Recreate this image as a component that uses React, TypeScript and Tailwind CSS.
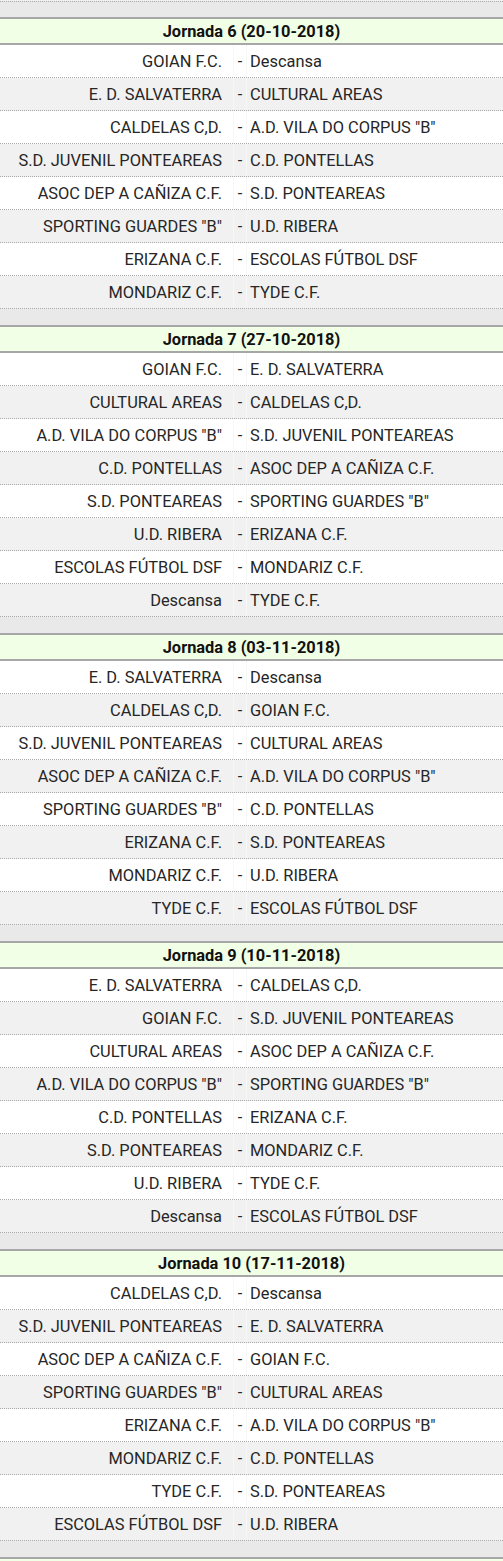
import React from "react";

type Section = { title: string; rows: [string, string][] };

const sections: Section[] = [
  {
    title: "Jornada 6 (20-10-2018)",
    rows: [
      ["GOIAN F.C.", "Descansa"],
      ["E. D. SALVATERRA", "CULTURAL AREAS"],
      ["CALDELAS C,D.", 'A.D. VILA DO CORPUS "B"'],
      ["S.D. JUVENIL PONTEAREAS", "C.D. PONTELLAS"],
      ["ASOC DEP A CAÑIZA C.F.", "S.D. PONTEAREAS"],
      ['SPORTING GUARDES "B"', "U.D. RIBERA"],
      ["ERIZANA C.F.", "ESCOLAS FÚTBOL DSF"],
      ["MONDARIZ C.F.", "TYDE C.F."],
    ],
  },
  {
    title: "Jornada 7 (27-10-2018)",
    rows: [
      ["GOIAN F.C.", "E. D. SALVATERRA"],
      ["CULTURAL AREAS", "CALDELAS C,D."],
      ['A.D. VILA DO CORPUS "B"', "S.D. JUVENIL PONTEAREAS"],
      ["C.D. PONTELLAS", "ASOC DEP A CAÑIZA C.F."],
      ["S.D. PONTEAREAS", 'SPORTING GUARDES "B"'],
      ["U.D. RIBERA", "ERIZANA C.F."],
      ["ESCOLAS FÚTBOL DSF", "MONDARIZ C.F."],
      ["Descansa", "TYDE C.F."],
    ],
  },
  {
    title: "Jornada 8 (03-11-2018)",
    rows: [
      ["E. D. SALVATERRA", "Descansa"],
      ["CALDELAS C,D.", "GOIAN F.C."],
      ["S.D. JUVENIL PONTEAREAS", "CULTURAL AREAS"],
      ["ASOC DEP A CAÑIZA C.F.", 'A.D. VILA DO CORPUS "B"'],
      ['SPORTING GUARDES "B"', "C.D. PONTELLAS"],
      ["ERIZANA C.F.", "S.D. PONTEAREAS"],
      ["MONDARIZ C.F.", "U.D. RIBERA"],
      ["TYDE C.F.", "ESCOLAS FÚTBOL DSF"],
    ],
  },
  {
    title: "Jornada 9 (10-11-2018)",
    rows: [
      ["E. D. SALVATERRA", "CALDELAS C,D."],
      ["GOIAN F.C.", "S.D. JUVENIL PONTEAREAS"],
      ["CULTURAL AREAS", "ASOC DEP A CAÑIZA C.F."],
      ['A.D. VILA DO CORPUS "B"', 'SPORTING GUARDES "B"'],
      ["C.D. PONTELLAS", "ERIZANA C.F."],
      ["S.D. PONTEAREAS", "MONDARIZ C.F."],
      ["U.D. RIBERA", "TYDE C.F."],
      ["Descansa", "ESCOLAS FÚTBOL DSF"],
    ],
  },
  {
    title: "Jornada 10 (17-11-2018)",
    rows: [
      ["CALDELAS C,D.", "Descansa"],
      ["S.D. JUVENIL PONTEAREAS", "E. D. SALVATERRA"],
      ["ASOC DEP A CAÑIZA C.F.", "GOIAN F.C."],
      ['SPORTING GUARDES "B"', "CULTURAL AREAS"],
      ["ERIZANA C.F.", 'A.D. VILA DO CORPUS "B"'],
      ["MONDARIZ C.F.", "C.D. PONTELLAS"],
      ["TYDE C.F.", "S.D. PONTEAREAS"],
      ["ESCOLAS FÚTBOL DSF", "U.D. RIBERA"],
    ],
  },
];

function Row({ left, right, odd }: { left: string; right: string; odd: boolean }) {
  return (
    <div
      className={`grid grid-cols-[233px_14px_1fr] h-[33px] border-b border-dotted border-[#a9a9a9] ${
        odd ? "bg-[#f1f1f1]" : "bg-white"
      }`}
    >
      <div className="flex items-center justify-end pr-[11px] whitespace-nowrap">{left}</div>
      <div className="flex items-center justify-center border-x border-[#f7f7f7]">-</div>
      <div className="flex items-center pl-[3px] whitespace-nowrap">{right}</div>
    </div>
  );
}

function Header({ title }: { title: string }) {
  return (
    <div className="h-[28px] border-y-2 border-[#a7a7a7] bg-[#f1ffe6] flex items-center justify-center font-bold text-[#111]">
      {title}
    </div>
  );
}

export default function App() {
  return (
    <div
      className="w-[503px] text-[16.4px] leading-[19px] text-[#262626] overflow-hidden h-[1561px]"
      style={{ fontFamily: "Roboto, 'Liberation Sans', sans-serif" }}
    >
      <div className="h-[1px] bg-[#f1f1f1]" />
      <div className="h-[16px] border-t border-dotted border-[#a9a9a9] bg-[#e9e9e9]" />
      {sections.map((s, si) => (
        <div key={si}>
          {si > 0 && <div className="h-[16px] bg-[#e9e9e9]" />}
          <Header title={s.title} />
          {s.rows.map((r, ri) => (
            <Row key={ri} left={r[0]} right={r[1]} odd={ri % 2 === 1} />
          ))}
        </div>
      ))}
      <div className="h-[16px] bg-[#e9e9e9]" />
      <div className="h-[28px] border-t-2 border-[#a7a7a7] bg-[#f1ffe6]" />
    </div>
  );
}
